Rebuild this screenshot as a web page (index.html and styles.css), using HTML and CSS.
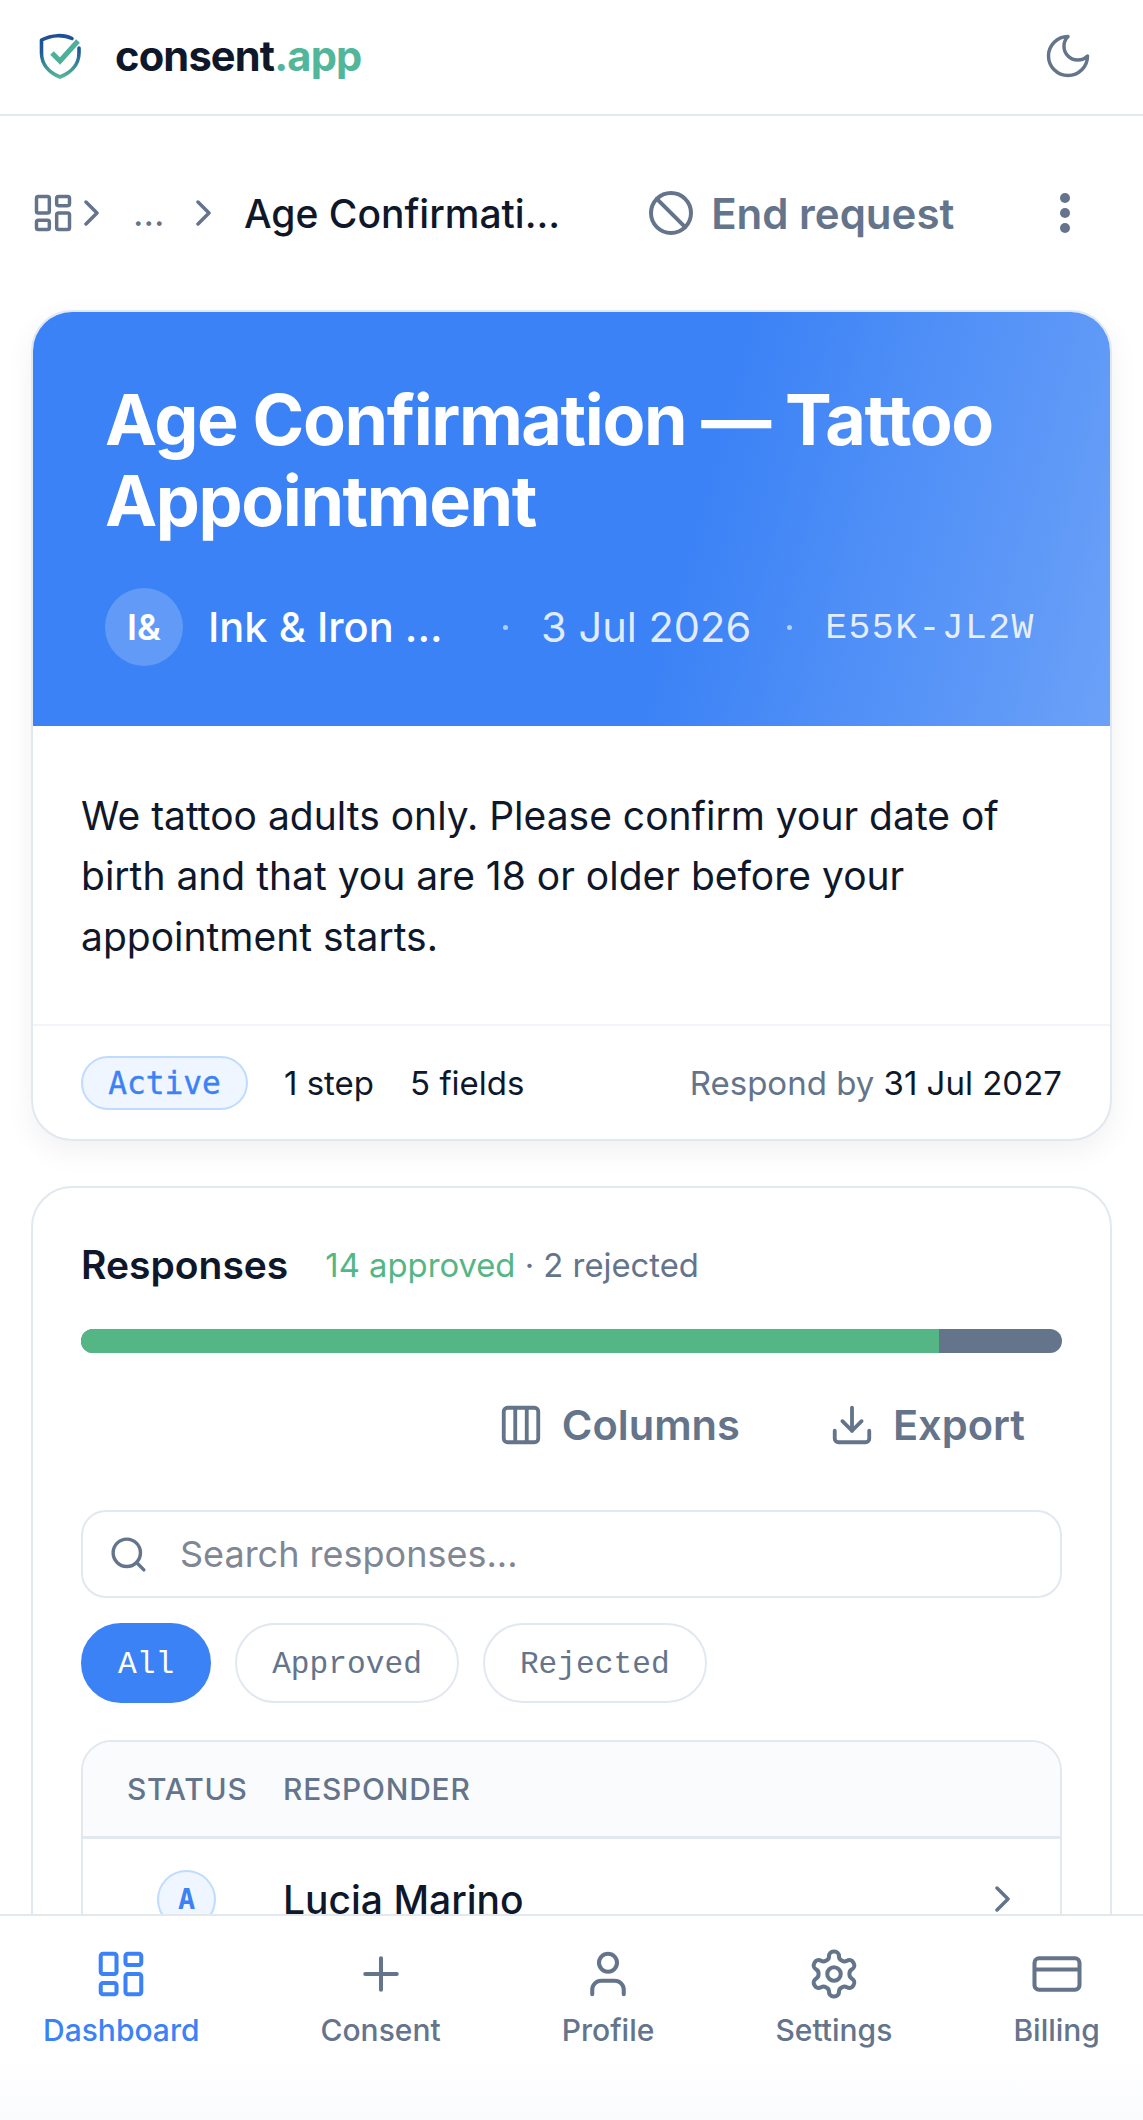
FILE: index.html
```html
<!DOCTYPE html>
<html lang="en">
<head>
    <meta charset="UTF-8">
    <meta name="viewport" content="width=device-width, initial-scale=1.0">
    <title>Age Confirmation — Tattoo Appointment</title>
    <link rel="stylesheet" href="styles.css">
</head>
<body>

    <header class="topbar">
        <div class="brand">
            <svg class="brand-logo" viewBox="0 0 48 48" fill="none">
                <defs>
                    <linearGradient id="shieldGrad" gradientUnits="userSpaceOnUse" x1="0" y1="3" x2="0" y2="45">
                        <stop offset="0" stop-color="#1e4f96"/>
                        <stop offset="0.4" stop-color="#1f5a96"/>
                        <stop offset="1" stop-color="#52b69a"/>
                    </linearGradient>
                </defs>
                <path d="M35 6.500C27 2.500 15 2.500 4.500 8v13c0 12 8.500 20 18.500 24 10-4 19-12 19-24v-5" stroke="url(#shieldGrad)" stroke-width="3.600" stroke-linecap="round" stroke-linejoin="round"/>
                <path d="M15 21l8 8L41 9" stroke="#4fb09a" stroke-width="5"/>
            </svg>
            <span class="brand-name">consent<span class="brand-tld">.app</span></span>
        </div>
        <svg class="theme-icon" viewBox="0 0 24 24" fill="none" stroke="#64748b" stroke-width="1.600" stroke-linecap="round" stroke-linejoin="round">
            <path d="M12 3a6 6 0 0 0 9 9 9 9 0 1 1-9-9Z"/>
        </svg>
    </header>

    <main class="page">
        <div class="toolbar">
            <svg class="crumb-home" viewBox="0 0 24 24" fill="none" stroke="#64748b" stroke-width="1.900" stroke-linejoin="round">
                <rect x="3" y="3" width="7" height="9" rx="1"/>
                <rect x="14" y="3" width="7" height="5" rx="1"/>
                <rect x="14" y="12" width="7" height="9" rx="1"/>
                <rect x="3" y="16" width="7" height="5" rx="1"/>
            </svg>
            <svg class="chevron crumb-sep" viewBox="0 0 15 26"><path d="M2 2l11 11L2 24"/></svg>
            <span class="crumb-more">...</span>
            <svg class="chevron" viewBox="0 0 15 26"><path d="M2 2l11 11L2 24"/></svg>
            <span class="crumb-current">Age Confirmati...</span>
            <button class="end-btn">
                <svg class="end-icon" viewBox="0 0 24 24" fill="none" stroke="#64748b" stroke-width="2" stroke-linecap="round"><circle cx="12" cy="12" r="10"/><path d="m4.900 4.900 14.200 14.200"/></svg>
                End request
            </button>
            <svg class="kebab" viewBox="0 0 12 44" fill="#64748b"><circle cx="6" cy="7" r="5"/><circle cx="6" cy="22" r="5"/><circle cx="6" cy="37" r="5"/></svg>
        </div>

        <section class="card hero-card">
            <div class="hero">
                <h1>Age Confirmation — Tattoo Appointment</h1>
                <div class="hero-meta">
                    <span class="org-avatar">I&amp;</span>
                    <span class="org-name">Ink &amp; Iron ...</span>
                    <span class="hero-dot"></span>
                    <span class="hero-date">3 Jul 2026</span>
                    <span class="hero-dot"></span>
                    <span class="hero-code">E55K-JL2W</span>
                </div>
            </div>
            <p class="hero-desc">We tattoo adults only. Please confirm your date of birth and that you are 18 or older before your appointment starts.</p>
            <div class="hero-foot">
                <span class="badge-active">Active</span>
                <span class="foot-count">1 step</span>
                <span class="foot-count">5 fields</span>
                <span class="foot-due">Respond by <b>31 Jul 2027</b></span>
            </div>
        </section>

        <section class="card responses">
            <div class="resp-head">
                <h2>Responses</h2>
                <span class="resp-summary"><span class="approved">14 approved</span> · 2 rejected</span>
            </div>
            <div class="resp-bar"><div class="resp-bar-fill" style="width: 87.5%"></div></div>
            <div class="resp-actions">
                <button class="action-btn">
                    <svg viewBox="0 0 24 24" fill="none" stroke="#64748b" stroke-width="2" stroke-linejoin="round"><rect x="3" y="3" width="18" height="18" rx="2"/><path d="M9 3v18M15 3v18"/></svg>
                    Columns
                </button>
                <button class="action-btn">
                    <svg viewBox="0 0 24 24" fill="none" stroke="#64748b" stroke-width="2" stroke-linecap="round" stroke-linejoin="round"><path d="M21 15v4a2 2 0 0 1-2 2H5a2 2 0 0 1-2-2v-4"/><path d="m7 10 5 5 5-5"/><path d="M12 15V3"/></svg>
                    Export
                </button>
            </div>
            <div class="search">
                <svg viewBox="0 0 24 24" fill="none" stroke="#64748b" stroke-width="2" stroke-linecap="round"><circle cx="11" cy="11" r="8"/><path d="m21 21-4.300-4.300"/></svg>
                <span class="search-text">Search responses...</span>
            </div>
            <div class="filters">
                <span class="chip chip-on">All</span>
                <span class="chip">Approved</span>
                <span class="chip">Rejected</span>
            </div>
            <div class="resp-table">
                <div class="resp-table-head">
                    <span class="col-status">Status</span>
                    <span>Responder</span>
                </div>
                <div class="resp-row">
                    <span class="col-status"><span class="row-badge">A</span></span>
                    <span class="row-name">Lucia Marino</span>
                    <svg class="chevron row-chevron" viewBox="0 0 15 26"><path d="M2 2l11 11L2 24"/></svg>
                </div>
            </div>
        </section>
    </main>

    <nav class="bottom-nav">
        <a class="nav-item nav-on">
            <svg viewBox="0 0 24 24" fill="none" stroke="#3b82f6" stroke-width="1.800" stroke-linejoin="round"><rect x="3" y="3" width="7" height="9" rx="1"/><rect x="14" y="3" width="7" height="5" rx="1"/><rect x="14" y="12" width="7" height="9" rx="1"/><rect x="3" y="16" width="7" height="5" rx="1"/></svg>
            Dashboard
        </a>
        <a class="nav-item">
            <svg viewBox="0 0 24 24" fill="none" stroke="#64748b" stroke-width="1.800" stroke-linecap="round"><path d="M5 12h14M12 5v14"/></svg>
            Consent
        </a>
        <a class="nav-item">
            <svg viewBox="0 0 24 24" fill="none" stroke="#64748b" stroke-width="1.800" stroke-linecap="round" stroke-linejoin="round"><path d="M19 21v-2a4 4 0 0 0-4-4H9a4 4 0 0 0-4 4v2"/><circle cx="12" cy="7" r="4"/></svg>
            Profile
        </a>
        <a class="nav-item">
            <svg viewBox="0 0 24 24" fill="none" stroke="#64748b" stroke-width="1.800" stroke-linecap="round" stroke-linejoin="round"><path d="M12.220 2h-.44a2 2 0 0 0-2 2v.18a2 2 0 0 1-1 1.730l-.43.25a2 2 0 0 1-2 0l-.15-.08a2 2 0 0 0-2.730.73l-.22.38a2 2 0 0 0 .73 2.730l.15.1a2 2 0 0 1 1 1.720v.51a2 2 0 0 1-1 1.740l-.15.09a2 2 0 0 0-.73 2.730l.22.38a2 2 0 0 0 2.730.73l.15-.08a2 2 0 0 1 2 0l.43.25a2 2 0 0 1 1 1.730V20a2 2 0 0 0 2 2h.44a2 2 0 0 0 2-2v-.18a2 2 0 0 1 1-1.730l.43-.25a2 2 0 0 1 2 0l.15.08a2 2 0 0 0 2.730-.73l.22-.39a2 2 0 0 0-.73-2.730l-.15-.08a2 2 0 0 1-1-1.740v-.5a2 2 0 0 1 1-1.740l.15-.09a2 2 0 0 0 .73-2.730l-.22-.38a2 2 0 0 0-2.730-.73l-.15.08a2 2 0 0 1-2 0l-.43-.25a2 2 0 0 1-1-1.730V4a2 2 0 0 0-2-2z"/><circle cx="12" cy="12" r="3"/></svg>
            Settings
        </a>
        <a class="nav-item">
            <svg viewBox="0 0 24 24" fill="none" stroke="#64748b" stroke-width="1.800" stroke-linejoin="round"><rect x="2" y="5" width="20" height="14" rx="2"/><path d="M2 10h20"/></svg>
            Billing
        </a>
    </nav>

</body>
</html>
```

FILE: styles.css
```css
* {
    box-sizing: border-box;
}

html, body {
    margin: 0;
    height: 2120px;
    overflow: hidden;
}

body {
    font-family: Inter, "Liberation Sans", sans-serif;
    background-color: #fff;
    color: #0f172a;
}

h1, h2, p {
    margin: 0;
}

button {
    font: inherit;
    background: none;
    border: 0;
    padding: 0;
}

.topbar {
    height: 116px;
    padding: 0 49px 2px 37px;
    display: flex;
    align-items: center;
    justify-content: space-between;
    border-bottom: 2px solid #e2e8f0;
}

.brand {
    display: flex;
    align-items: center;
    gap: 30px;
}

.brand-logo {
    width: 48px;
    height: 48px;
}

.brand-name {
    font-size: 41.600px;
    font-weight: 700;
    letter-spacing: -0.830px;
}

.brand-tld {
    color: #52b69a;
}

.theme-icon {
    width: 52px;
    height: 52px;
}

.page {
    padding: 0 31px;
}

.toolbar {
    height: 194px;
    display: flex;
    align-items: center;
}

.chevron {
    width: 15px;
    height: 26px;
    flex: none;
    fill: none;
    stroke: #64748b;
    stroke-width: 3.500;
    stroke-linecap: round;
    stroke-linejoin: round;
}

.crumb-home {
    width: 44px;
    height: 44px;
    flex: none;
}

.crumb-sep {
    margin-left: 9px;
}

.crumb-more {
    color: #64748b;
    font-size: 36.400px;
    margin-left: 34px;
    width: 63px;
}

.crumb-current {
    font-size: 39px;
    font-weight: 500;
    margin-left: 33px;
    white-space: nowrap;
}

.end-btn {
    display: flex;
    align-items: center;
    gap: 16px;
    margin-left: 87px;
    color: #64748b;
    font-size: 42px;
    font-weight: 600;
    white-space: nowrap;
}

.end-icon {
    width: 48px;
    height: 48px;
}

.kebab {
    width: 12px;
    height: 44px;
    margin-left: auto;
    margin-right: 41px;
}

.card {
    background-color: #fff;
    border: 2px solid #e2e8f0;
    border-radius: 41px;
}

.hero-card {
    overflow: hidden;
    box-shadow: 0 10px 30px rgba(15, 23, 42, 0.06);
}

.hero {
    height: 414px;
    padding: 68px 40px 0 72px;
    color: #fff;
    background: linear-gradient(105deg, #3b82f6 60%, #6ba1f8 100%);
}

.hero h1 {
    font-size: 70px;
    line-height: 80.500px;
    font-weight: 700;
    letter-spacing: -1.400px;
}

.hero-meta {
    display: flex;
    align-items: center;
    margin-top: 47px;
}

.org-avatar {
    width: 78px;
    height: 78px;
    flex: none;
    border-radius: 50%;
    background-color: rgba(255, 255, 255, 0.2);
    display: flex;
    align-items: center;
    justify-content: center;
    font-size: 36px;
    font-weight: 600;
}

.org-name {
    font-size: 41.600px;
    font-weight: 500;
    margin-left: 25px;
    width: 238px;
    white-space: nowrap;
}

.hero-dot {
    width: 5px;
    height: 5px;
    border-radius: 50%;
    background-color: rgba(255, 255, 255, 0.6);
    flex: none;
    margin: 0 33px 0 57px;
}

.hero-date + .hero-dot {
    margin: 0 33px 0 36px;
}

.hero-date {
    font-size: 41.600px;
    color: rgba(255, 255, 255, 0.85);
    white-space: nowrap;
}

.hero-code {
    padding-top: 3px;
    font-family: "Liberation Mono", monospace;
    font-size: 36.400px;
    letter-spacing: 1.450px;
    color: rgba(255, 255, 255, 0.85);
    white-space: nowrap;
}

.hero-desc {
    padding: 60px 48px 57px;
    font-size: 39px;
    line-height: 60.450px;
    border-bottom: 2px solid #f1f5f9;
}

.hero-foot {
    height: 113px;
    padding: 0 48px;
    display: flex;
    align-items: center;
    font-size: 33px;
}

.badge-active {
    width: 167px;
    height: 54px;
    border: 2px solid #bfdbfe;
    border-radius: 27px;
    background-color: #eff6ff;
    color: #3b82f6;
    font-family: "DejaVu Sans Mono", monospace;
    font-size: 31.200px;
    -webkit-text-stroke: 0.4px #3b82f6;
    display: flex;
    align-items: center;
    justify-content: center;
}

.foot-count {
    margin-left: 36px;
}

.foot-due {
    margin-left: auto;
    color: #64748b;
}

.foot-due b {
    color: #0f172a;
    font-weight: 400;
}

.responses {
    margin-top: 45px;
    padding: 53px 48px 0;
}

.resp-head {
    display: flex;
    align-items: center;
    gap: 37px;
}

.resp-head h2 {
    font-size: 39px;
    font-weight: 600;
}

.resp-summary {
    font-size: 32.800px;
    color: #64748b;
}

.approved {
    color: #55b685;
}

.resp-bar {
    height: 24px;
    margin-top: 41px;
    border-radius: 12px;
    background-color: #64748b;
    overflow: hidden;
}

.resp-bar-fill {
    height: 100%;
    background-color: #55b685;
}

.resp-actions {
    display: flex;
    justify-content: flex-end;
    gap: 89px;
    margin-top: 47px;
    padding-right: 37px;
}

.action-btn {
    display: flex;
    align-items: center;
    gap: 18px;
    color: #64748b;
    font-size: 41.600px;
    font-weight: 600;
}

.action-btn svg {
    width: 46px;
    height: 46px;
}

.search {
    height: 88px;
    margin-top: 60px;
    padding: 0 25px;
    border: 2px solid #e2e8f0;
    border-radius: 25px;
    display: flex;
    align-items: center;
    gap: 31px;
}

.search svg {
    width: 41px;
    height: 41px;
}

.search-text {
    font-size: 36px;
    color: #7f8795;
}

.filters {
    display: flex;
    gap: 24px;
    margin-top: 25px;
}

.chip {
    height: 80px;
    padding: 2px 35px 0;
    border: 2px solid #e2e8f0;
    border-radius: 40px;
    color: #64748b;
    font-family: "Liberation Mono", monospace;
    font-size: 31.200px;
    display: flex;
    align-items: center;
}

.chip-on {
    background-color: #3b82f6;
    border-color: #3b82f6;
    color: #fff;
}

.resp-table {
    margin-top: 37px;
    border: 2px solid #e2e8f0;
    border-radius: 31px;
    overflow: hidden;
}

.resp-table-head {
    height: 97px;
    padding: 0 0 0 44px;
    display: flex;
    align-items: center;
    background-color: #fafbfd;
    border-bottom: 3px solid #e2e8f0;
    color: #64748b;
    font-size: 29.900px;
    font-weight: 500;
    letter-spacing: 0.800px;
    text-transform: uppercase;
}

.col-status {
    width: 156px;
    flex: none;
}

.resp-row {
    height: 120px;
    padding: 0 50px 0 44px;
    display: flex;
    align-items: center;
}

.row-badge {
    width: 59px;
    height: 59px;
    margin-left: 30px;
    border: 2px solid #bfdbfe;
    border-radius: 50%;
    background-color: #eff6ff;
    color: #3b82f6;
    font-family: "DejaVu Sans Mono", monospace;
    font-size: 28.600px;
    font-weight: 700;
    display: flex;
    align-items: center;
    justify-content: center;
}

.row-name {
    font-size: 39px;
    font-weight: 500;
}

.row-chevron {
    margin-left: auto;
}

.bottom-nav {
    position: fixed;
    left: 0;
    right: 0;
    bottom: 0;
    height: 206px;
    padding: 0 43px;
    display: flex;
    justify-content: space-between;
    background: linear-gradient(#fff 70%, #fafbfd 100%);
    border-top: 2px solid #e2e8f0;
}

.nav-item {
    display: flex;
    flex-direction: column;
    align-items: center;
    gap: 11px;
    padding-top: 31px;
    color: #64748b;
    font-size: 30px;
    font-weight: 500;
}

.nav-on {
    color: #3b82f6;
}

.nav-item svg {
    width: 54px;
    height: 54px;
}
```
